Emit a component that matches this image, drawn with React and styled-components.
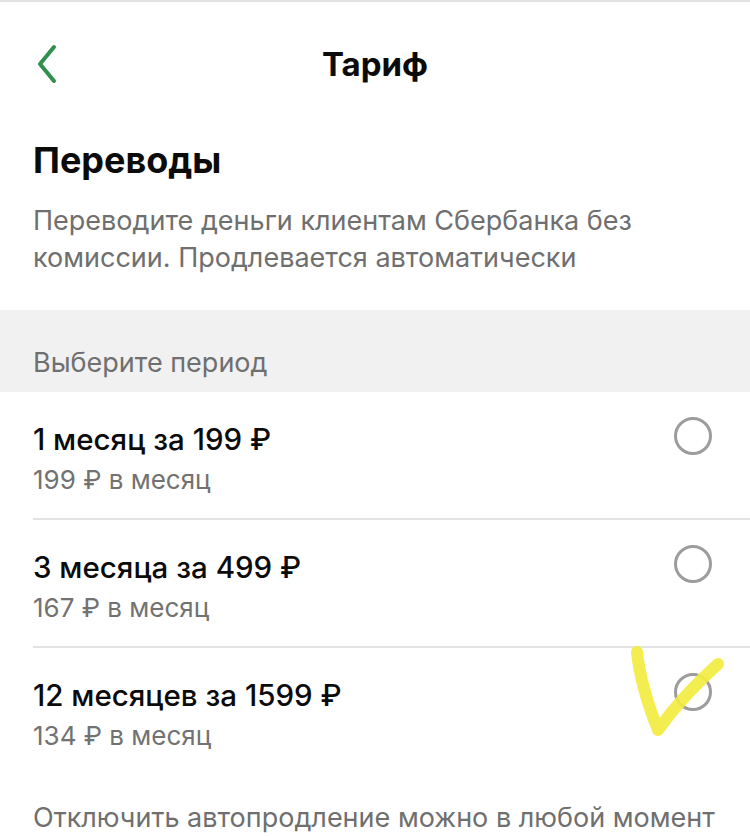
import React from "react";
import styled, { createGlobalStyle } from "styled-components";

const GlobalStyle = createGlobalStyle`
  html, body {
    margin: 0;
    padding: 0;
    background: #ffffff;
  }
  body {
    font-family: Inter, "Noto Sans", "DejaVu Sans", sans-serif;
    -webkit-font-smoothing: antialiased;
  }
  * { box-sizing: border-box; }
`;

const Screen = styled.div`
  position: relative;
  width: 750px;
  height: 836px;
  overflow: hidden;
  background: #ffffff;
  border-top: 2px solid #e2e2e2;
  display: flex;
  flex-direction: column;
`;

const Header = styled.header`
  position: relative;
  height: 126px;
  display: flex;
  align-items: center;
  justify-content: center;
`;

const BackButton = styled.button`
  position: absolute;
  left: 30px;
  top: 39px;
  width: 34px;
  height: 46px;
  padding: 0;
  border: 0;
  background: transparent;
  display: flex;
  align-items: center;
  justify-content: center;
  cursor: pointer;
`;

const Title = styled.h1`
  margin: 0;
  font-size: 33px;
  line-height: 40px;
  font-weight: 700;
  letter-spacing: 0;
  color: #0b0b0b;
`;

const Intro = styled.section`
  padding: 12px 33px 0;
`;

const Heading = styled.h2`
  margin: 0;
  font-size: 36px;
  line-height: 42px;
  font-weight: 700;
  letter-spacing: 0;
  color: #0b0b0b;
`;

const Lead = styled.p`
  margin: 21px 0 0;
  font-size: 27px;
  line-height: 37px;
  font-weight: 400;
  letter-spacing: 0;
  color: #6f6f6f;
`;

const SectionBand = styled.div`
  margin-top: 34px;
  height: 83px;
  background: #f1f1f1;
  padding: 0 33px 14px;
  display: flex;
  align-items: flex-end;
  font-size: 27px;
  line-height: 30px;
  letter-spacing: 0;
  color: #6f6f6f;
`;

const OptionList = styled.ul`
  list-style: none;
  margin: 0;
  padding: 0;
`;

const Option = styled.li`
  margin-left: 33px;
  padding: 29px 38px 22px 0;
  display: flex;
  align-items: flex-start;
  justify-content: space-between;
  border-bottom: ${({ $last }) => ($last ? "0" : "2px solid #e3e3e3")};
`;

const OptionText = styled.div`
  display: flex;
  flex-direction: column;
  gap: 7px;
`;

const OptionTitle = styled.span`
  font-size: 29.5px;
  line-height: 36px;
  font-weight: 500;
  letter-spacing: 0;
  color: #0b0b0b;
`;

const OptionNote = styled.span`
  font-size: 26px;
  line-height: 32px;
  font-weight: 400;
  letter-spacing: 0;
  color: #727272;
`;

const Radio = styled.span`
  flex: none;
  margin-top: -4px;
  width: 38px;
  height: 38px;
  border-radius: 50%;
  border: 3px solid #9c9c9c;
`;

const Footnote = styled.p`
  margin: 25px 0 0;
  padding: 0 33px;
  font-size: 27px;
  line-height: 37px;
  letter-spacing: 0;
  color: #6f6f6f;
  white-space: nowrap;
`;

const Mark = styled.svg`
  position: absolute;
  left: 620px;
  top: 638px;
  pointer-events: none;
`;

const options = [
  { title: "1 месяц за 199 ₽", note: "199 ₽ в месяц" },
  { title: "3 месяца за 499 ₽", note: "167 ₽ в месяц" },
  { title: "12 месяцев за 1599 ₽", note: "134 ₽ в месяц" },
];

function ChevronLeft() {
  return (
    <svg width="24" height="40" viewBox="0 0 24 40" fill="none">
      <path
        d="M19 3 L5 20 L19 37"
        stroke="#2f8f4b"
        strokeWidth="4"
        strokeLinecap="round"
        strokeLinejoin="round"
      />
    </svg>
  );
}

export default function App() {
  return (
    <>
      <GlobalStyle />
      <Screen>
        <Header>
          <BackButton aria-label="Назад">
            <ChevronLeft />
          </BackButton>
          <Title>Тариф</Title>
        </Header>

        <Intro>
          <Heading>Переводы</Heading>
          <Lead>
            Переводите деньги клиентам Сбербанка без комиссии. Продлевается
            автоматически
          </Lead>
        </Intro>

        <SectionBand>Выберите период</SectionBand>

        <OptionList>
          {options.map((o, i) => (
            <Option key={o.title} $last={i === options.length - 1}>
              <OptionText>
                <OptionTitle>{o.title}</OptionTitle>
                <OptionNote>{o.note}</OptionNote>
              </OptionText>
              <Radio />
            </Option>
          ))}
        </OptionList>

        <Footnote>Отключить автопродление можно в любой момент</Footnote>

        <Mark width="110" height="110" viewBox="0 0 110 110">
          <path
            d="M17 12 C20 40, 30 70, 38 90 C55 66, 78 42, 98 24"
            stroke="#f3ec40"
            strokeWidth="12"
            strokeLinecap="round"
            strokeLinejoin="round"
            fill="none"
            opacity="0.92"
          />
        </Mark>
      </Screen>
    </>
  );
}
